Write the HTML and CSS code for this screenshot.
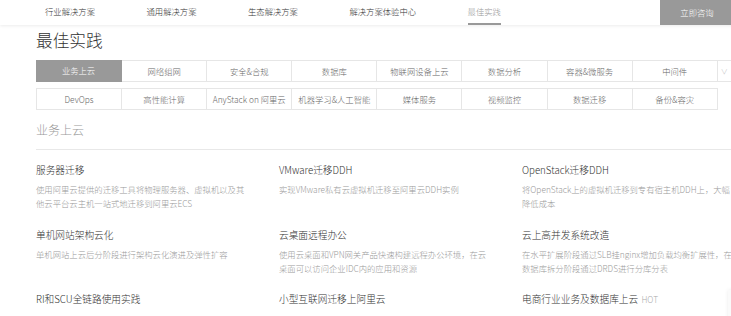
FILE: index.html
```html
<!DOCTYPE html>
<html lang="zh-CN">
<head>
  <meta charset="UTF-8">
  <meta name="viewport" content="width=device-width, initial-scale=1.0">
  <title>最佳实践</title>
  <link rel="stylesheet" href="styles.css">
</head>
<body>

<header class="topbar">
  <nav class="topnav">
    <a href="#">行业解决方案</a>
    <a href="#">通用解决方案</a>
    <a href="#">生态解决方案</a>
    <a href="#">解决方案体验中心</a>
    <a href="#" class="current">最佳实践</a>
  </nav>
  <a href="#" class="consult-btn">立即咨询</a>
</header>

<main class="page">
  <h1 class="page-title">最佳实践</h1>

  <div class="tabs tabs-main">
    <a href="#" class="tab active">业务上云</a>
    <a href="#" class="tab">网络组网</a>
    <a href="#" class="tab">安全&amp;合规</a>
    <a href="#" class="tab">数据库</a>
    <a href="#" class="tab">物联网设备上云</a>
    <a href="#" class="tab">数据分析</a>
    <a href="#" class="tab">容器&amp;微服务</a>
    <a href="#" class="tab">中间件</a>
    <a href="#" class="tab tab-more">&#8744;</a>
  </div>

  <div class="tabs tabs-extra">
    <a href="#" class="tab">DevOps</a>
    <a href="#" class="tab">高性能计算</a>
    <a href="#" class="tab">AnyStack on 阿里云</a>
    <a href="#" class="tab">机器学习&amp;人工智能</a>
    <a href="#" class="tab">媒体服务</a>
    <a href="#" class="tab">视频监控</a>
    <a href="#" class="tab">数据迁移</a>
    <a href="#" class="tab">备份&amp;容灾</a>
  </div>

  <section class="practice">
    <h2 class="practice-title">业务上云</h2>
    <div class="cards">
      <div class="card">
        <h3>服务器迁移</h3>
        <p>使用阿里云提供的迁移工具将物理服务器、虚拟机以及其他云平台云主机一站式地迁移到阿里云ECS</p>
      </div>
      <div class="card">
        <h3>VMware迁移DDH</h3>
        <p>实现VMware私有云虚拟机迁移至阿里云DDH实例</p>
      </div>
      <div class="card">
        <h3>OpenStack迁移DDH</h3>
        <p>将OpenStack上的虚拟机迁移到专有宿主机DDH上，大幅降低成本</p>
      </div>
      <div class="card">
        <h3>单机网站架构云化</h3>
        <p>单机网站上云后分阶段进行架构云化演进及弹性扩容</p>
      </div>
      <div class="card">
        <h3>云桌面远程办公</h3>
        <p>使用云桌面和VPN网关产品快速构建远程办公环境，在云桌面可以访问企业IDC内的应用和资源</p>
      </div>
      <div class="card">
        <h3>云上高并发系统改造</h3>
        <p>在水平扩展阶段通过SLB挂nginx增加负载均衡扩展性，在数据库拆分阶段通过DRDS进行分库分表</p>
      </div>
      <div class="card">
        <h3>RI和SCU全链路使用实践</h3>
      </div>
      <div class="card">
        <h3>小型互联网迁移上阿里云</h3>
      </div>
      <div class="card">
        <h3>电商行业业务及数据库上云 <span class="hot">HOT</span></h3>
      </div>
    </div>
  </section>
</main>

<div class="side-float"></div>

</body>
</html>
```

FILE: styles.css
```css
html, body {
    margin: 0;
    padding: 0;
    overflow: hidden;
}
body {
    font-family: "Noto Sans CJK SC", "Noto Sans", sans-serif;
    font-weight: 300;
    background: #fff;
    color: #333;
    width: 731px;
    height: 316px;
}
a {
    text-decoration: none;
    color: inherit;
}

/* 顶部导航 */
.topbar {
    display: flex;
    align-items: flex-start;
    width: 734px;
    height: 25px;
    box-shadow: 0 1px 3px rgba(0, 0, 0, 0.08);
    background: #fff;
}
.topnav {
    display: flex;
    gap: 51.5px;
    padding-left: 45px;
}
.topnav a {
    font-size: 8.33px;
    line-height: 23px;
    color: #333;
    border-bottom: 2px solid transparent;
}
.topnav a.current {
    color: #999;
    border-bottom-color: #999;
}
.consult-btn {
    margin-left: auto;
    width: 74px;
    height: 25px;
    line-height: 25px;
    text-align: center;
    font-size: 8.33px;
    color: #fff;
    background: #999;
}

/* 主体 */
.page {
    width: 700px;
    margin-left: 36px;
}
.page-title {
    margin: 4px 0 8px;
    font-size: 16.7px;
    font-weight: 300;
    line-height: 23px;
    color: #333;
}

.tabs {
    display: flex;
    border-top: 1px solid #e6e6e6;
    border-left: 1px solid #e6e6e6;
    width: max-content;
}
.tab {
    box-sizing: border-box;
    width: 85.1px;
    height: 21px;
    line-height: 20px;
    text-align: center;
    font-size: 8.33px;
    color: #666;
    border-right: 1px solid #e6e6e6;
    border-bottom: 1px solid #e6e6e6;
    white-space: nowrap;
    overflow: hidden;
}
.tabs-main .tab:first-child {
    margin-left: -1px;
    margin-top: -1px;
    height: 22px;
    line-height: 21px;
    width: 86.1px;
}
.tab.active {
    background: #999;
    color: #fff;
    border-color: #999;
}
.tab.tab-more {
    width: 13px;
    color: #bbb;
    font-size: 7px;
    border-right: none;
}
.tabs-extra {
    margin-top: 6px;
}

/* 业务上云 */
.practice-title {
    margin: 11px 0 0;
    padding-bottom: 11px;
    font-size: 12px;
    font-weight: 300;
    line-height: 17px;
    color: #999;
    border-bottom: 1px solid #e8e8e8;
}
.cards {
    display: grid;
    grid-template-columns: repeat(3, 208px);
    column-gap: 35px;
    row-gap: 17.5px;
    margin-top: 13px;
}
.card h3 {
    margin: 0;
    font-size: 9.7px;
    font-weight: 300;
    line-height: 14px;
    color: #333;
    white-space: nowrap;
}
.card p {
    margin: 5px 0 0;
    min-height: 28px;
    width: 212px;
    font-size: 8.33px;
    line-height: 14px;
    color: #999;
}
.hot {
    font-size: 8.33px;
    color: #aaa;
    margin-left: 1px;
}

.side-float {
    position: absolute;
    left: 728px;
    top: 290px;
    width: 20px;
    height: 30px;
    background: #fafafa;
    box-shadow: 0 0 4px rgba(0, 0, 0, 0.08);
}
```
